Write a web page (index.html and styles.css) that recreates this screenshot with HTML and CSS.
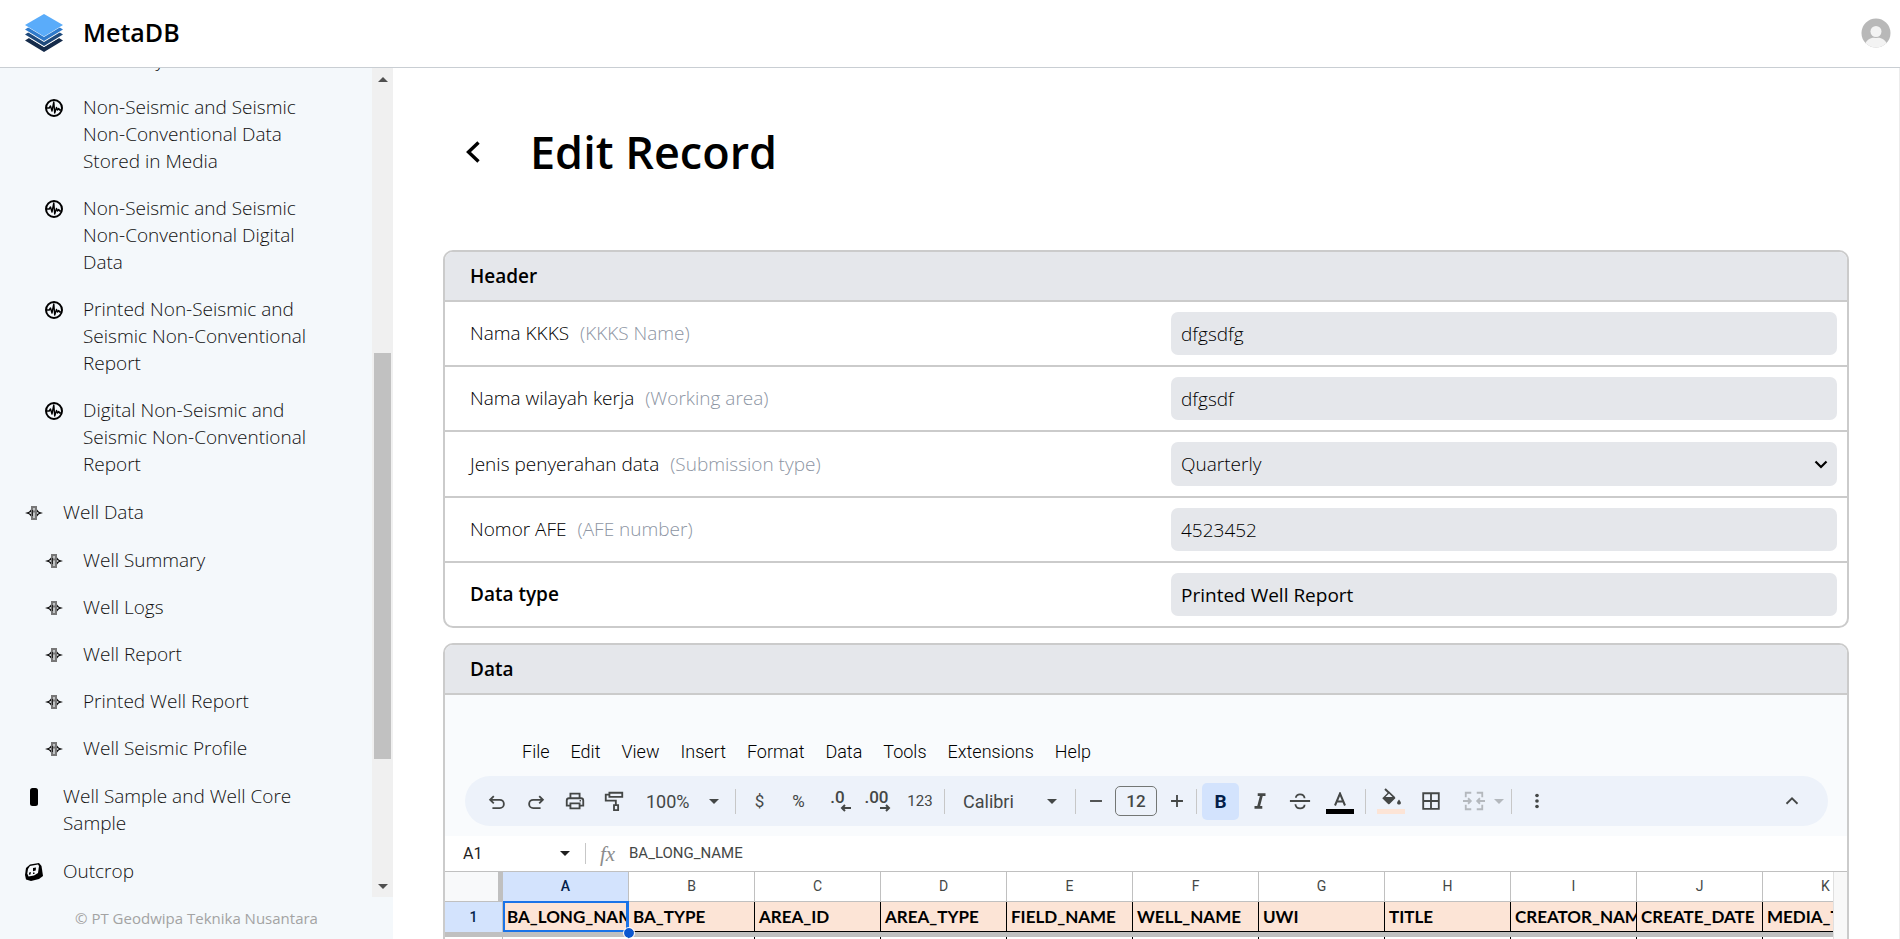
FILE: index.html
```html
<!DOCTYPE html>
<html lang="en">
<head>
<meta charset="utf-8">
<title>MetaDB</title>
<link rel="stylesheet" href="styles.css">
</head>
<body>
<svg class="defs" aria-hidden="true">
  <symbol id="wave" viewBox="0 0 18 18"><circle cx="9" cy="9" r="8" fill="none" stroke="#000" stroke-width="2"/><path d="M2 9h2.200l1.300-2 1.500 5 1.800-9 .9 11 1.800-5.500 1 2.500 1.200-1.500 1 1.500H16" fill="none" stroke="#000" stroke-width="1.400" stroke-linejoin="round"/></symbol>
  <symbol id="well" viewBox="0 0 18 18"><path d="M6 2h6v14H6z" fill="#777"/><path d="M0 9l4-1.300L6 5.500v7L4 10.300zM18 9l-4-1.300L12 5.500v7l2-2.200z" fill="#111"/><path d="M3.800 9L6 8v2zM12 8l2 1-2 1z" fill="#f4f8fb"/><path d="M9 4v2.500M9 8.500V14" stroke="#f4f8fb" stroke-width="1.200" fill="none"/><path d="M7.500 6v6" stroke="#222"/></symbol>
  <symbol id="core" viewBox="0 0 18 18"><rect x="5" y="0" width="8" height="18" rx="2.500"/></symbol>
  <symbol id="rock" viewBox="0 0 18 18"><path d="M5 1.500L14 0l2.500 3L18 13l-4 3-8 2-5-1.500L0 12l1-7z"/><path d="M5 3l8-1.500 1 1.500-1 7-4 2.500-5.500 1L2.300 10.500 3 6z" fill="#f4f8fb"/><path d="M8 5l3-.5-.3 3-2.700.7zM4.200 9.500l1.700-.5-.4 2.500-1.600.3zM8 9.500h1.500v1.500H8z"/></symbol>
  <symbol id="caret" viewBox="0 0 10 5"><path d="M0 0h10L5 5z" fill="currentColor"/></symbol>
</svg>

<header class="topbar">
  <svg class="logo" viewBox="0 0 38 38">
    <path d="M0 26.500l19 11.500 19-11.500-4-2.500-15 9-15-9z" fill="#152b4a"/>
    <path d="M0 21.500l19 11.500 19-11.500-4-2.500-15 9-15-9z" fill="#fff"/>
    <path d="M0 20.500l19 11.500 19-11.500-4-2.500-15 9-15-9z" fill="#1f4a7c"/>
    <path d="M0 16.500l19 11.500 19-11.500-4-2.500-15 9-15-9z" fill="#fff"/>
    <path d="M0 15.500l19 11.500 19-11.500-4-2.500-15 9-15-9z" fill="#2f7acb"/>
    <path d="M0 11.500l19 11.500 19-11.500-19-11.500z" fill="#fff"/>
    <path d="M0 11l19 11.500L38 11 19 0z" fill="#5aacfa"/>
  </svg>
  <span class="brand">MetaDB</span>
  <button class="avatar" aria-label="Account">
    <svg viewBox="0 0 30 30"><defs><clipPath id="round"><circle cx="15" cy="15" r="14.500"/></clipPath></defs><g clip-path="url(#round)"><path d="M0 0h30v30H0z" fill="#b8b8b8"/><path d="M3 30c1-8 6-10.500 12-10.500S26 22 27 30z" fill="#f3f3f3"/><circle cx="15" cy="13.500" r="6.500" fill="#b8b8b8"/><circle cx="15" cy="13.500" r="5.500" fill="#f3f3f3"/></g></svg>
  </button>
</header>

<div class="shell">
  <aside class="sidebar">
    <div class="side-scroll">
      <nav class="side-nav">
        <ul class="sub">
          <li><a href="#"><svg></svg>Summary</a></li>
          <li><a href="#"><svg><use href="#wave"/></svg>Non-Seismic and Seismic Non-Conventional Data Stored in Media</a></li>
          <li><a href="#"><svg><use href="#wave"/></svg>Non-Seismic and Seismic Non-Conventional Digital Data</a></li>
          <li><a href="#"><svg><use href="#wave"/></svg>Printed Non-Seismic and Seismic Non-Conventional Report</a></li>
          <li><a href="#"><svg><use href="#wave"/></svg>Digital Non-Seismic and Seismic Non-Conventional Report</a></li>
        </ul>
        <a href="#"><svg><use href="#well"/></svg>Well Data</a>
        <ul class="sub">
          <li><a href="#"><svg><use href="#well"/></svg>Well Summary</a></li>
          <li><a href="#"><svg><use href="#well"/></svg>Well Logs</a></li>
          <li><a href="#"><svg><use href="#well"/></svg>Well Report</a></li>
          <li><a href="#"><svg><use href="#well"/></svg>Printed Well Report</a></li>
          <li><a href="#"><svg><use href="#well"/></svg>Well Seismic Profile</a></li>
        </ul>
        <a href="#"><svg><use href="#core"/></svg>Well Sample and Well Core Sample</a>
        <a href="#"><svg><use href="#rock"/></svg>Outcrop</a>
      </nav>
      <div class="scrollbar" aria-hidden="true">
        <div class="sb-arrow up"><svg><use href="#caret"/></svg></div>
        <div class="sb-before"></div>
        <div class="sb-thumb"></div>
        <div class="sb-after"></div>
        <div class="sb-arrow"><svg><use href="#caret"/></svg></div>
      </div>
    </div>
    <footer class="copyright">© PT Geodwipa Teknika Nusantara</footer>
  </aside>

  <main class="main">
    <div class="title-row">
      <button class="back" aria-label="Back"><svg viewBox="0 0 14 22"><path d="M12.500 1.500L2.500 11l10 9.500" fill="none" stroke="#000" stroke-width="3.400"/></svg></button>
      <h1>Edit Record</h1>
    </div>

    <section class="card">
      <h2>Header</h2>
      <div class="row"><label for="kkks">Nama KKKS <span>(KKKS Name)</span></label><div class="value"><input id="kkks" value="dfgsdfg"></div></div>
      <div class="row"><label for="area">Nama wilayah kerja <span>(Working area)</span></label><div class="value"><input id="area" value="dfgsdf"></div></div>
      <div class="row"><label for="kind">Jenis penyerahan data <span>(Submission type)</span></label><div class="value select"><select id="kind"><option>Quarterly</option></select><svg viewBox="0 0 14 9"><path d="M1.500 1.500L7 7l5.500-5.500" fill="none" stroke="#000" stroke-width="2.200"/></svg></div></div>
      <div class="row"><label for="afe">Nomor AFE <span>(AFE number)</span></label><div class="value"><input id="afe" value="4523452"></div></div>
      <div class="row strong"><label for="type">Data type</label><div class="value"><input id="type" value="Printed Well Report" readonly></div></div>
    </section>

    <section class="card">
      <h2>Data</h2>
      <div class="sheet">
        <div class="menubar">
          <button>File</button><button>Edit</button><button>View</button><button>Insert</button><button>Format</button><button>Data</button><button>Tools</button><button>Extensions</button><button>Help</button>
        </div>
        <div class="toolbar">
          <button class="tool" aria-label="Undo"><svg class="low" viewBox="0 0 24 24"><path d="M8.500 4.500L4.500 8.500l4 4M5 8.500h10a4.500 4.500 0 0 1 0 9H7"/></svg></button>
          <button class="tool" aria-label="Redo"><svg class="low" viewBox="0 0 24 24"><path d="M15.500 4.500l4 4-4 4M19 8.500H9a4.500 4.500 0 0 0 0 9h8"/></svg></button>
          <button class="tool" aria-label="Print"><svg viewBox="0 0 24 24"><path d="M7 8V4h10v4M7 17H3v-5.500Q3 9 5.500 9h13Q21 9 21 11.500V17h-4M7 14.500h10V20H7z"/><path d="M17 11h1.500v1.500H17z" class="solid"/></svg></button>
          <button class="tool" aria-label="Paint format"><svg viewBox="0 0 24 24"><path d="M7 3h14v4.500H7zM7 5H3v6.500h11V16M12 16.500h4.500V22H12z"/></svg></button>
          <button class="drop zoom">100%<svg><use href="#caret"/></svg></button>
          <i class="sep"></i>
          <button class="tool">$</button>
          <button class="tool">%</button>
          <button class="tool dec" aria-label="Decrease decimals"><b>.0</b><svg viewBox="0 0 12 8"><path d="M11 4H2M5 1L2 4l3 3"/></svg></button>
          <button class="tool dec" aria-label="Increase decimals"><b>.00</b><svg viewBox="0 0 12 8"><path d="M1 4h9M7 1l3 3-3 3"/></svg></button>
          <button class="tool format">123</button>
          <i class="sep"></i>
          <button class="drop family">Calibri<svg><use href="#caret"/></svg></button>
          <i class="sep"></i>
          <button class="tool" aria-label="Decrease font size"><svg viewBox="0 0 24 24"><path d="M5.500 12h13"/></svg></button>
          <input class="size" aria-label="Font size" value="12">
          <button class="tool" aria-label="Increase font size"><svg viewBox="0 0 24 24"><path d="M5.500 12h13M12 5.500v13"/></svg></button>
          <i class="sep"></i>
          <button class="bold">B</button>
          <button class="tool wide" aria-label="Italic"><svg viewBox="0 0 24 24"><path d="M9.500 5H18M6 19h8.500M13.800 5l-3.600 14" class="thick"/></svg></button>
          <button class="tool wide" aria-label="Strikethrough"><svg viewBox="0 0 24 24"><path d="M1 12h22M17 9C16.500 3.500 7.500 3.500 7.500 8.500M7 15.500c.5 6 10 6 10 .5" /></svg></button>
          <button class="tool wide stack" aria-label="Text color"><svg viewBox="0 0 24 14"><path d="M7 13.500L12 1.500l5 12M8.800 9.500h6.400"/></svg><span class="swatch black"></span></button>
          <i class="sep spaced"></i>
          <button class="tool wide stack" aria-label="Fill color"><svg class="bucket" viewBox="0 0 24 18"><path d="M6 1l9.500 9"/><path class="solid" d="M4 9.500L10 3.500l6.500 6.500-6 6q-.7.600-1.400 0L3.500 10.500q-.5-.5.500-1z"/><path class="hole" d="M6.500 9L10 5.500 13.500 9z"/><path class="solid" d="M20 11.500c3 3.500 2 5 0 5s-3-1.500 0-5z"/></svg><span class="swatch peach"></span></button>
          <button class="tool wide" aria-label="Borders"><svg viewBox="0 0 24 24"><path d="M3.500 3.500h17v17h-17zM12 3.500v17M3.500 12h17"/></svg></button>
          <button class="merge" aria-label="Merge cells"><svg class="ic" viewBox="0 0 24 24"><path d="M9 3H3v5M15 3h6v5M9 21H3v-5M15 21h6v-5M0 12h8M5.500 9l3 3-3 3M24 12h-8M18.500 9l-3 3 3 3"/></svg><svg class="ca"><use href="#caret"/></svg></button>
          <i class="sep"></i>
          <button class="tool more" aria-label="More"><svg viewBox="0 0 24 24"><g class="solid"><circle cx="12" cy="6" r="2"/><circle cx="12" cy="12" r="2"/><circle cx="12" cy="18" r="2"/></g></svg></button>
          <button class="tool wide last" aria-label="Hide menus"><svg viewBox="0 0 24 24"><path d="M6 15l6-6 6 6"/></svg></button>
        </div>
        <div class="formula">
          <button class="namebox">A1<svg><use href="#caret"/></svg></button>
          <i class="sep"></i>
          <span class="fx">fx</span>
          <span>BA_LONG_NAME</span>
        </div>
        <div class="grid-wrap">
          <div class="grid-view">
            <table>
              <thead><tr><th class="corner"></th><th class="on">A</th><th>B</th><th>C</th><th>D</th><th>E</th><th>F</th><th>G</th><th>H</th><th>I</th><th>J</th><th>K</th></tr></thead>
              <tbody>
                <tr><th class="on">1</th><td class="active"><div>BA_LONG_NAME</div></td><td><div>BA_TYPE</div></td><td><div>AREA_ID</div></td><td><div>AREA_TYPE</div></td><td><div>FIELD_NAME</div></td><td><div>WELL_NAME</div></td><td><div>UWI</div></td><td><div>TITLE</div></td><td><div>CREATOR_NAME</div></td><td><div>CREATE_DATE</div></td><td><div>MEDIA_TYPE</div></td></tr>
                <tr class="freeze"><td colspan="12"></td></tr>
                <tr class="next"><th></th><td></td><td></td><td></td><td></td><td></td><td></td><td></td><td></td><td></td><td></td><td></td></tr>
              </tbody>
            </table>
          </div>
          <div class="gutter"></div>
        </div>
      </div>
    </section>
  </main>
</div>
</body>
</html>
```
FILE: styles.css
```css
* { box-sizing: border-box; }
body {
  margin: 0;
  height: 100vh;
  display: flex;
  flex-direction: column;
  overflow: hidden;
  background: #fff;
  color: #000;
  font-family: "Open Sans", sans-serif;
  font-size: 19px;
  line-height: 27px;
}
button, input, select { font: inherit; color: inherit; border: 0; background: none; padding: 0; margin: 0; }
ul { list-style: none; margin: 0; padding: 0; }
.defs { display: none; }

.topbar {
  flex: none;
  display: flex;
  align-items: center;
  height: 68px;
  padding: 0 9px 2px 25px;
  border-bottom: 1px solid #c9ced3;
}
.logo { width: 38px; height: 38px; margin-right: 20px; }
.brand { font-size: 25px; font-weight: 600; }
.avatar { margin-left: auto; width: 30px; height: 30px; }
.avatar svg { display: block; }

.shell { flex: 1; min-height: 0; display: flex; }
.sidebar { flex: none; width: 393px; display: flex; flex-direction: column; background: #f4f8fb; }
.side-scroll { flex: 1; min-height: 0; display: flex; }
.side-nav {
  flex: 1;
  display: flex;
  flex-direction: column;
  justify-content: flex-end;
  gap: 21px;
  padding: 0 60px 12px 25px;
  overflow: hidden;
  font-weight: 300;
}
.sub { display: flex; flex-direction: column; gap: 20px; padding-left: 20px; }
.side-nav a { display: flex; gap: 20px; color: #111; text-decoration: none; }
.side-nav svg { flex: none; width: 18px; height: 18px; margin-top: 5px; }
.scrollbar { width: 21px; display: flex; flex-direction: column; background: #f0f0f0; }
.sb-arrow { height: 22px; display: flex; align-items: center; justify-content: center; color: #505050; }
.sb-arrow svg { width: 10px; height: 5px; }
.up svg { transform: rotate(180deg); }
.sb-before { flex: 263; }
.sb-thumb { flex: 406; margin: 0 2px; background: #c1c1c1; }
.sb-after { flex: 116; }
.copyright { padding: 8px 0; text-align: center; font-size: 15px; line-height: 26px; color: #a3a3a3; }

.main { flex: 1; min-width: 0; overflow: hidden; padding: 48px 50px 0; border-right: 1px solid #ececec; }
.title-row { display: flex; align-items: center; gap: 50px; padding: 0 23px; margin-bottom: 62px; }
.back svg { display: block; width: 14px; height: 22px; }
h1 { margin: 0; font-size: 45px; line-height: 72px; font-weight: 600; }

.card { margin-bottom: 15px; border: 2px solid #cbcbcb; border-radius: 10px; overflow: hidden; }
h2 { margin: 0; padding: 11px 25px 10px; font-size: 19px; line-height: 27px; font-weight: 600; background: #e5e7eb; }
.row { display: grid; grid-template-columns: 1fr 1fr; align-items: center; border-top: 2px solid #cbcbcb; font-weight: 300; }
.row label { padding-left: 25px; }
.row span { margin-left: 6px; color: #8d95a3; }
.row.strong label { font-weight: 600; }
.row.strong input { font-weight: 400; }
.value { position: relative; padding: 10px 10px 10px 25px; }
.value input, .value select { display: block; width: 100%; padding: 8px 10px; height: 43px; border-radius: 7px; background: #e5e7eb; }
.value select { appearance: none; height: 44px; }
.value svg { position: absolute; right: 19px; top: 28px; width: 14px; height: 9px; }

.sheet { border-top: 2px solid #cbcbcb; background: #f9fbfd; font-family: Roboto, sans-serif; color: #444746; }
.menubar { display: flex; gap: 21px; padding: 43px 77px 10px; font-size: 18px; line-height: 28px; font-weight: 300; color: #000; }
.toolbar { display: flex; align-items: center; height: 50px; margin: 0 19px 10px 20px; padding: 0 16px 0 12px; border-radius: 25px; background: #edf2fa; }
.tool { flex: none; width: 39px; height: 38px; display: flex; align-items: center; justify-content: center; font-size: 17px; }
.wide { width: 40px; }
.toolbar svg { width: 22px; height: 22px; }
.toolbar svg path { fill: none; stroke: currentColor; stroke-width: 2; }
.toolbar svg .thick { stroke-width: 3; }
.toolbar svg .solid, .toolbar .solid circle { fill: currentColor; stroke: none; }
.toolbar svg .hole { fill: #edf2fa; stroke: none; }
.toolbar svg.low { margin-top: 3px; }
.drop, .merge, .namebox { display: flex; align-items: center; }
.drop { height: 38px; justify-content: space-between; font-size: 18px; }
.toolbar .drop svg, .toolbar .ca { width: 10px; height: 5px; }
.toolbar .drop path, .toolbar .ca path, #caret path { fill: currentColor; stroke: none; }
.zoom { width: 102px; padding: 0 16px 0 13px; }
.family { width: 130px; padding: 0 18px; }
.sep { flex: none; width: 1px; height: 25px; background: #c7c7c7; }
.zoom + .sep { margin-right: 4px; }
.dec { flex-direction: column; align-items: center; font-size: 17px; line-height: 14px; }
.toolbar .dec svg { width: 12px; height: 8px; margin-left: 16px; }
.dec b { font-weight: 500; }
.format { width: 48px; font-size: 15px; }
.size { width: 42px; height: 30px; border: 1px solid #747775; border-radius: 5px; text-align: center; font-size: 17px; font-weight: 500; }
.bold { width: 37px; height: 37px; margin: 0 1px 0 5px; border-radius: 5px; background: #d3e3fd; color: #041e49; font-weight: 700; }
.stack { flex-direction: column; justify-content: flex-end; padding-bottom: 6px; gap: 3px; }
.toolbar .stack svg { width: 24px; height: 14px; }
.toolbar .stack .bucket { height: 18px; }
.swatch { width: 28px; height: 5px; }
.black { background: #000; }
.peach { background: #fce4d6; }
.spaced { margin: 0 5px; }
.merge { width: 60px; height: 38px; padding-left: 12px; gap: 9px; color: #b4b8bd; }
.more { margin-left: 5px; }
.last { margin-left: auto; }

.formula { display: flex; align-items: center; height: 35px; background: #fff; font-size: 15px; }
.namebox { width: 140px; height: 34px; padding: 0 15px 0 18px; justify-content: space-between; font-size: 16px; color: #1f1f1f; }
.namebox svg { width: 10px; height: 5px; }
.formula .sep { height: 21px; }
.fx { width: 43px; padding-left: 14px; font: italic 21px/26px "Liberation Serif", serif; color: #8c8c8c; }

.grid-wrap { display: flex; border-top: 1px solid #c0c0c0; background: #fff; }
.grid-view { flex: 1; min-width: 0; overflow: hidden; }
.gutter { width: 14px; border-left: 1px solid #e0e0e0; background: #f8f8f8; }
table { width: 1444px; table-layout: fixed; border-collapse: separate; border-spacing: 0; }
th, td { padding: 0; height: 30px; }
thead th { width: 126px; border-right: 1px solid #c0c0c0; border-bottom: 1px solid #c0c0c0; font-size: 14px; line-height: 29px; font-weight: 400; }
thead .corner { width: 58px; border-right: 5px solid #c0c0c0; background: #f8f9fa; }
thead .on, tbody .on { background: #d3e3fd; color: #041e49; font-weight: 500; }
tbody th { font-size: 14px; border-right: 1px solid #c0c0c0; }
tbody td { background: #fce4d6; border-right: 1px solid #000; border-bottom: 1px solid #000; }
td div { padding-left: 4px; overflow: hidden; white-space: nowrap; font: 700 17px/28px Lato, sans-serif; color: #000; }
td.active { position: relative; border: 0; }
td.active::before { content: ""; position: absolute; inset: -1px 0 0; border: 2px solid #1a73e8; border-right-width: 3px; }
td.active::after { content: ""; position: absolute; right: -5px; bottom: -6px; width: 10px; height: 10px; border-radius: 50%; background: #0b57d0; outline: 1px solid #fff; z-index: 1; }
.freeze td { height: 5px; border: 0; background: #c0c0c0; }
.next td, .next th { height: 29px; background: #fff; }
```
